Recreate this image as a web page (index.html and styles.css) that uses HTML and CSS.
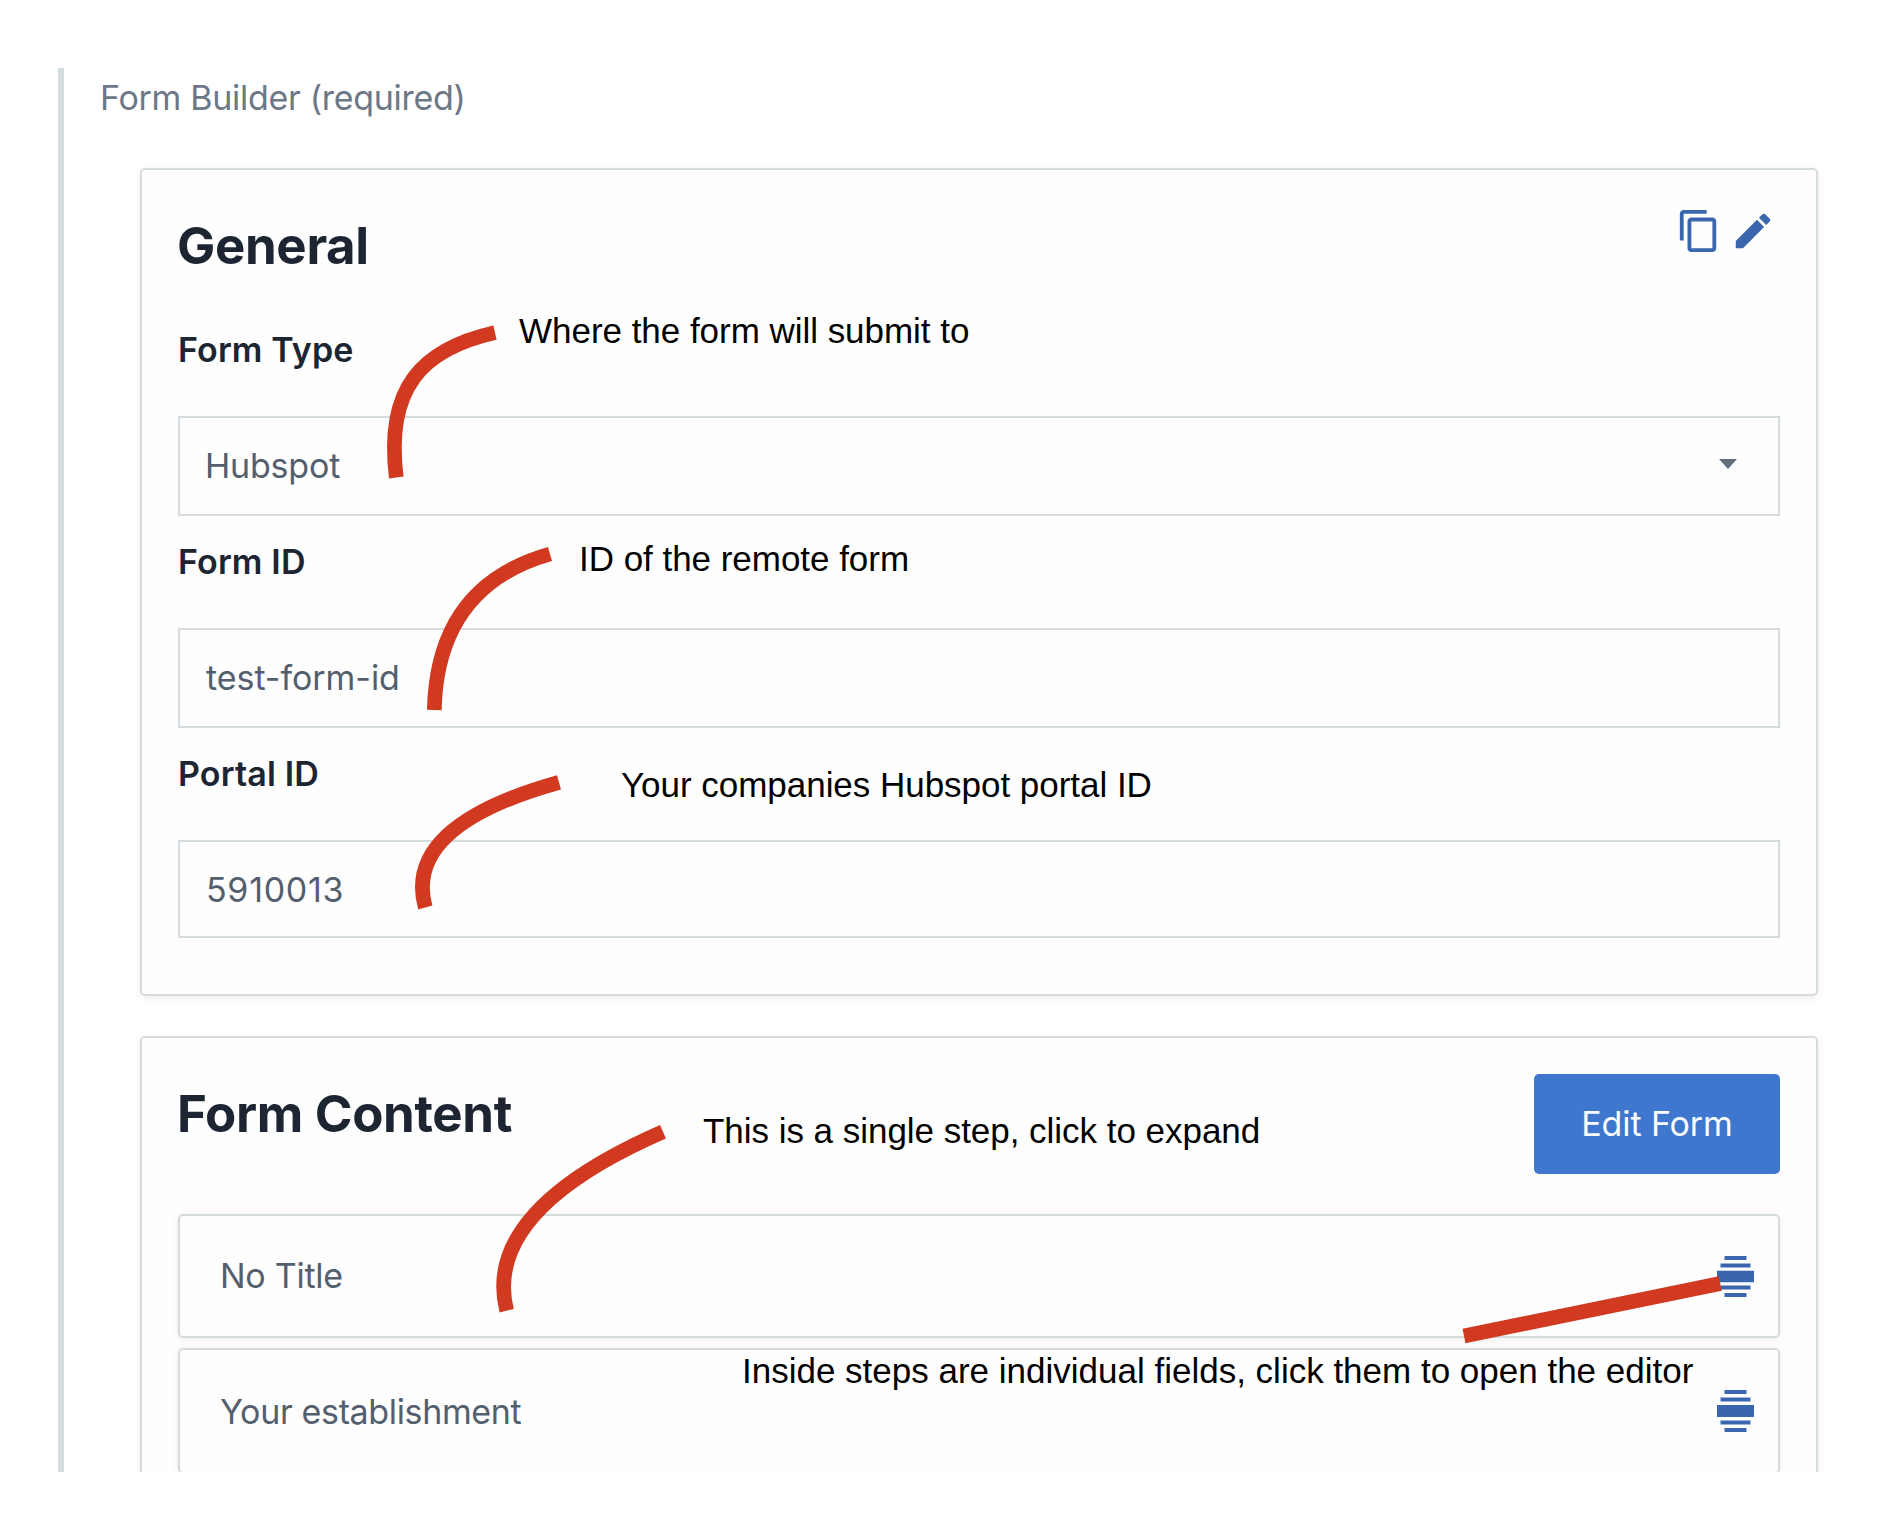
FILE: index.html
```html
<!DOCTYPE html>
<html lang="en">
<head>
<meta charset="utf-8">
<title>Form Builder</title>
<link rel="stylesheet" href="styles.css">
</head>
<body>
<main class="builder">
  <div class="builder-label">Form Builder (required)</div>

  <section class="card">
    <header class="card-header general-header">
      <h2 class="card-title">General</h2>
      <div class="actions">
        <svg class="action-icon" viewBox="0 0 24 24"><path d="M16 1H4c-1.1 0-2 .9-2 2v14h2V3h12V1zm3 4H8c-1.1 0-2 .9-2 2v14c0 1.1.9 2 2 2h11c1.1 0 2-.9 2-2V7c0-1.1-.9-2-2-2zm0 16H8V7h11v14z"/></svg>
        <svg class="action-icon" viewBox="0 0 24 24"><path d="M3 17.25V21h3.75L17.81 9.94l-3.75-3.75L3 17.25zM20.71 7.04c.39-.39.39-1.02 0-1.41l-2.34-2.34c-.39-.39-1.02-.39-1.41 0l-1.83 1.83 3.75 3.75 1.83-1.83z"/></svg>
      </div>
    </header>
    <div class="field">
      <div class="field-label">Form Type</div>
      <div class="control select"><span>Hubspot</span><svg class="caret" viewBox="0 0 18 10"><path d="M0 0h18L9 10z"/></svg></div>
    </div>
    <div class="field">
      <div class="field-label">Form ID</div>
      <div class="control">test-form-id</div>
    </div>
    <div class="field">
      <div class="field-label">Portal ID</div>
      <div class="control number">5910013</div>
    </div>
  </section>

  <section class="card">
    <header class="card-header content-header">
      <h2 class="card-title">Form Content</h2>
      <button class="edit-button">Edit Form</button>
    </header>
    <div class="steps">
      <div class="step">
        <span>No Title</span>
        <svg class="handle" viewBox="0 0 37 41"><path d="M7.500 0h22v4h-22zM3.500 7.400h30v4h-30zM0 14.700h37v11.600H0zM3.500 29.600h30v4h-30zM7.500 37h22v4h-22z"/></svg>
      </div>
      <div class="step step-last">
        <span>Your establishment</span>
        <svg class="handle handle-tall" viewBox="0 0 37 42"><path d="M7.500 0h22v4h-22zM3.500 7.500h30v4h-30zM0 15h37v12H0zM3.500 30.500h30v4h-30zM7.500 38h22v4h-22z"/></svg>
      </div>
    </div>
  </section>
</main>

<svg class="pointers" viewBox="0 0 1886 1532">
  <path d="M396.300 477.500C385 388 422 349 495 332.700"/>
  <path d="M434.300 710Q437 586 550 554"/>
  <path d="M425.300 907.500Q402.500 826 559 782.300"/>
  <path d="M506.700 1310.700Q481.500 1211 663 1131.700"/>
  <path d="M1464 1336L1720.300 1283.500"/>
</svg>
<div class="note note-type">Where the form will submit to</div>
<div class="note note-id">ID of the remote form</div>
<div class="note note-portal">Your companies Hubspot portal ID</div>
<div class="note note-step">This is a single step, click to expand</div>
<div class="note note-fields">Inside steps are individual fields, click them to open the editor</div>
</body>
</html>
```
FILE: styles.css
```css
* { box-sizing: border-box; }

body {
  position: relative;
  width: 1886px;
  height: 1532px;
  margin: 0;
  padding: 68px 0 0 58px;
  overflow: hidden;
  background: #fff;
  color: #545f6e;
  font: 400 34px/40px Inter, "Liberation Sans", sans-serif;
  letter-spacing: -0.25px;
}

.builder {
  height: 1404px;
  padding: 10px 68px 0 76px;
  overflow: hidden;
  border-left: 6px solid #d5dde0;
}

.builder-label {
  margin: 0 0 50px -40px;
  color: #6c7887;
  letter-spacing: -0.3px;
}

.card {
  margin-bottom: 40px;
  padding: 36px 36px 56px;
  border: 2px solid #d5dce0;
  border-radius: 5px;
  background: #fefefe;
  box-shadow: 0 2px 8px rgba(0, 0, 0, 0.07);
}

.card-header {
  display: flex;
  align-items: flex-start;
  justify-content: space-between;
}

.general-header { height: 124px; }
.content-header { margin-bottom: 40px; }

.card-title {
  margin: 10px 0 0 -1px;
  color: #1d2532;
  font-size: 51px;
  font-weight: 700;
  line-height: 60px;
  letter-spacing: -0.35px;
}

.actions {
  display: flex;
  gap: 8px;
  padding: 2px 4px 0 0;
}

.action-icon {
  width: 46px;
  height: 46px;
  fill: #3a66ad;
}

.field + .field { margin-top: 26px; }

.field-label {
  margin-bottom: 46px;
  color: #1d2532;
  font-weight: 600;
  letter-spacing: 0.15px;
}

.control {
  display: flex;
  align-items: center;
  justify-content: space-between;
  height: 100px;
  padding: 0 41px 0 26px;
  border: 2px solid #d5dce0;
  background: #fefefe;
  letter-spacing: -0.05px;
}

.select {
  padding-left: 25px;
  letter-spacing: -0.2px;
}

.number {
  height: 98px;
  padding-top: 2px;
  letter-spacing: 0.7px;
}

.caret {
  width: 18px;
  height: 10px;
  margin-top: -4px;
  fill: #626e7c;
}

.edit-button {
  width: 246px;
  height: 100px;
  padding: 0;
  border: 0;
  border-radius: 5px;
  background: #3f76ce;
  color: #fafcff;
  font: inherit;
  letter-spacing: -0.1px;
}

.steps {
  display: flex;
  flex-direction: column;
  gap: 10px;
}

.step {
  display: flex;
  align-items: center;
  justify-content: space-between;
  height: 124px;
  padding: 0 24px 0 40px;
  border: 2px solid #d5dce0;
  border-radius: 5px;
  background: #fefefe;
  box-shadow: 0 2px 8px rgba(0, 0, 0, 0.07);
}

.step-last {
  height: 126px;
  letter-spacing: -0.35px;
}

.step-last span { padding-top: 2px; }

.handle {
  width: 37px;
  height: 41px;
  fill: #3a66ad;
}

.handle-tall { height: 42px; }

/* Annotations laid over the form */
.pointers {
  position: absolute;
  top: 0;
  left: 0;
  width: 1886px;
  height: 1532px;
  fill: none;
  stroke: #d13a20;
  stroke-width: 14.7px;
}

.note {
  position: absolute;
  color: #000;
  font: 35px/40px "Liberation Sans", Arial, sans-serif;
  letter-spacing: -0.03px;
  white-space: nowrap;
}

.note-type { top: 311px; left: 519px; }
.note-id { top: 539px; left: 579px; }
.note-portal { top: 765px; left: 621px; }
.note-step { top: 1111px; left: 703px; }
.note-fields { top: 1351px; left: 742px; letter-spacing: 0; }
```
